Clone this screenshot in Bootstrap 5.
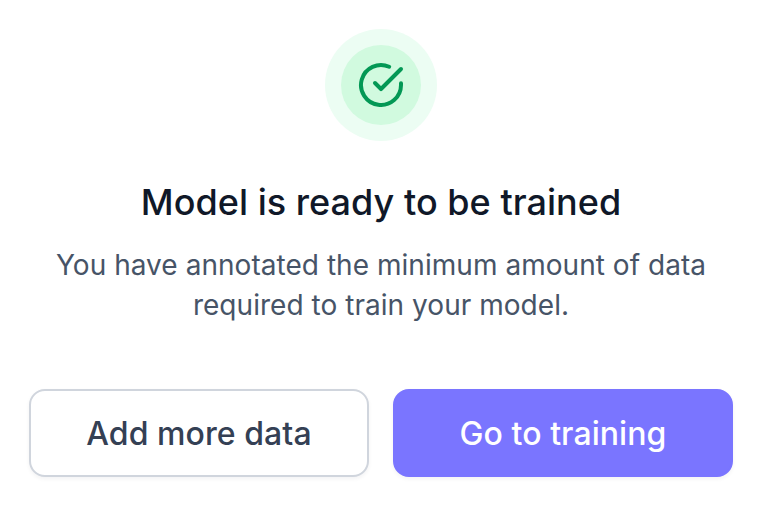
<!DOCTYPE html>
<html lang="en">
<head>
<meta charset="utf-8">
<meta name="viewport" content="width=device-width, initial-scale=1">
<title>Model is ready to be trained</title>
<link href="https://cdn.jsdelivr.net/npm/bootstrap@5.3.0/dist/css/bootstrap.min.css" rel="stylesheet">
<style>
body{font-family:Inter,sans-serif;background:#fff;height:508px;overflow:hidden}
.dialog-body{width:704px;margin-left:29px;padding-top:29px}
.status-ring{width:112px;height:112px;background:#ecfdf3;border-radius:50%}
.status-core{width:80px;height:80px;background:#d1fadf;border-radius:50%}
.dialog-title{font-size:36px;line-height:56px;font-weight:500;letter-spacing:.03px;color:#101828;margin-top:33px}
.dialog-text{font-size:28px;line-height:40px;letter-spacing:.04px;color:#475467;margin-top:15px}
.actions{margin-top:64px;gap:24px}
.actions .btn{height:88px;padding:8px 12px 6px;border-radius:16px;border-width:2px;font-size:32px;font-weight:500;letter-spacing:.06px;box-shadow:0 2px 4px rgba(16,24,40,.05)}
.btn-plain{background:#fff;border-color:#d0d5dd;color:#344054}
.btn-brand{background:#7a75ff;border-color:#7a75ff;color:#fff}
</style>
</head>
<body>
<main class="dialog-body text-center">
<div class="status-ring mx-auto d-flex align-items-center justify-content-center">
<div class="status-core d-flex align-items-center justify-content-center">
<svg width="48" height="48" viewBox="0 0 24 24" fill="none" stroke="#039855" stroke-width="2" stroke-linecap="round" stroke-linejoin="round" aria-hidden="true"><path d="M22 11.08V12a10 10 0 1 1-5.93-9.14"/><path d="M22 4 12 14.01l-3-3"/></svg>
</div>
</div>
<h1 class="dialog-title mb-0 text-nowrap">Model is ready to be trained</h1>
<p class="dialog-text mb-0 text-nowrap">You have annotated the minimum amount of data<br>required to train your model.</p>
<div class="actions d-flex">
<button type="button" class="btn btn-plain flex-fill w-50">Add more data</button>
<button type="button" class="btn btn-brand flex-fill w-50">Go to training</button>
</div>
</main>
<script src="https://cdn.jsdelivr.net/npm/bootstrap@5.3.0/dist/js/bootstrap.bundle.min.js"></script>
</body>
</html>
